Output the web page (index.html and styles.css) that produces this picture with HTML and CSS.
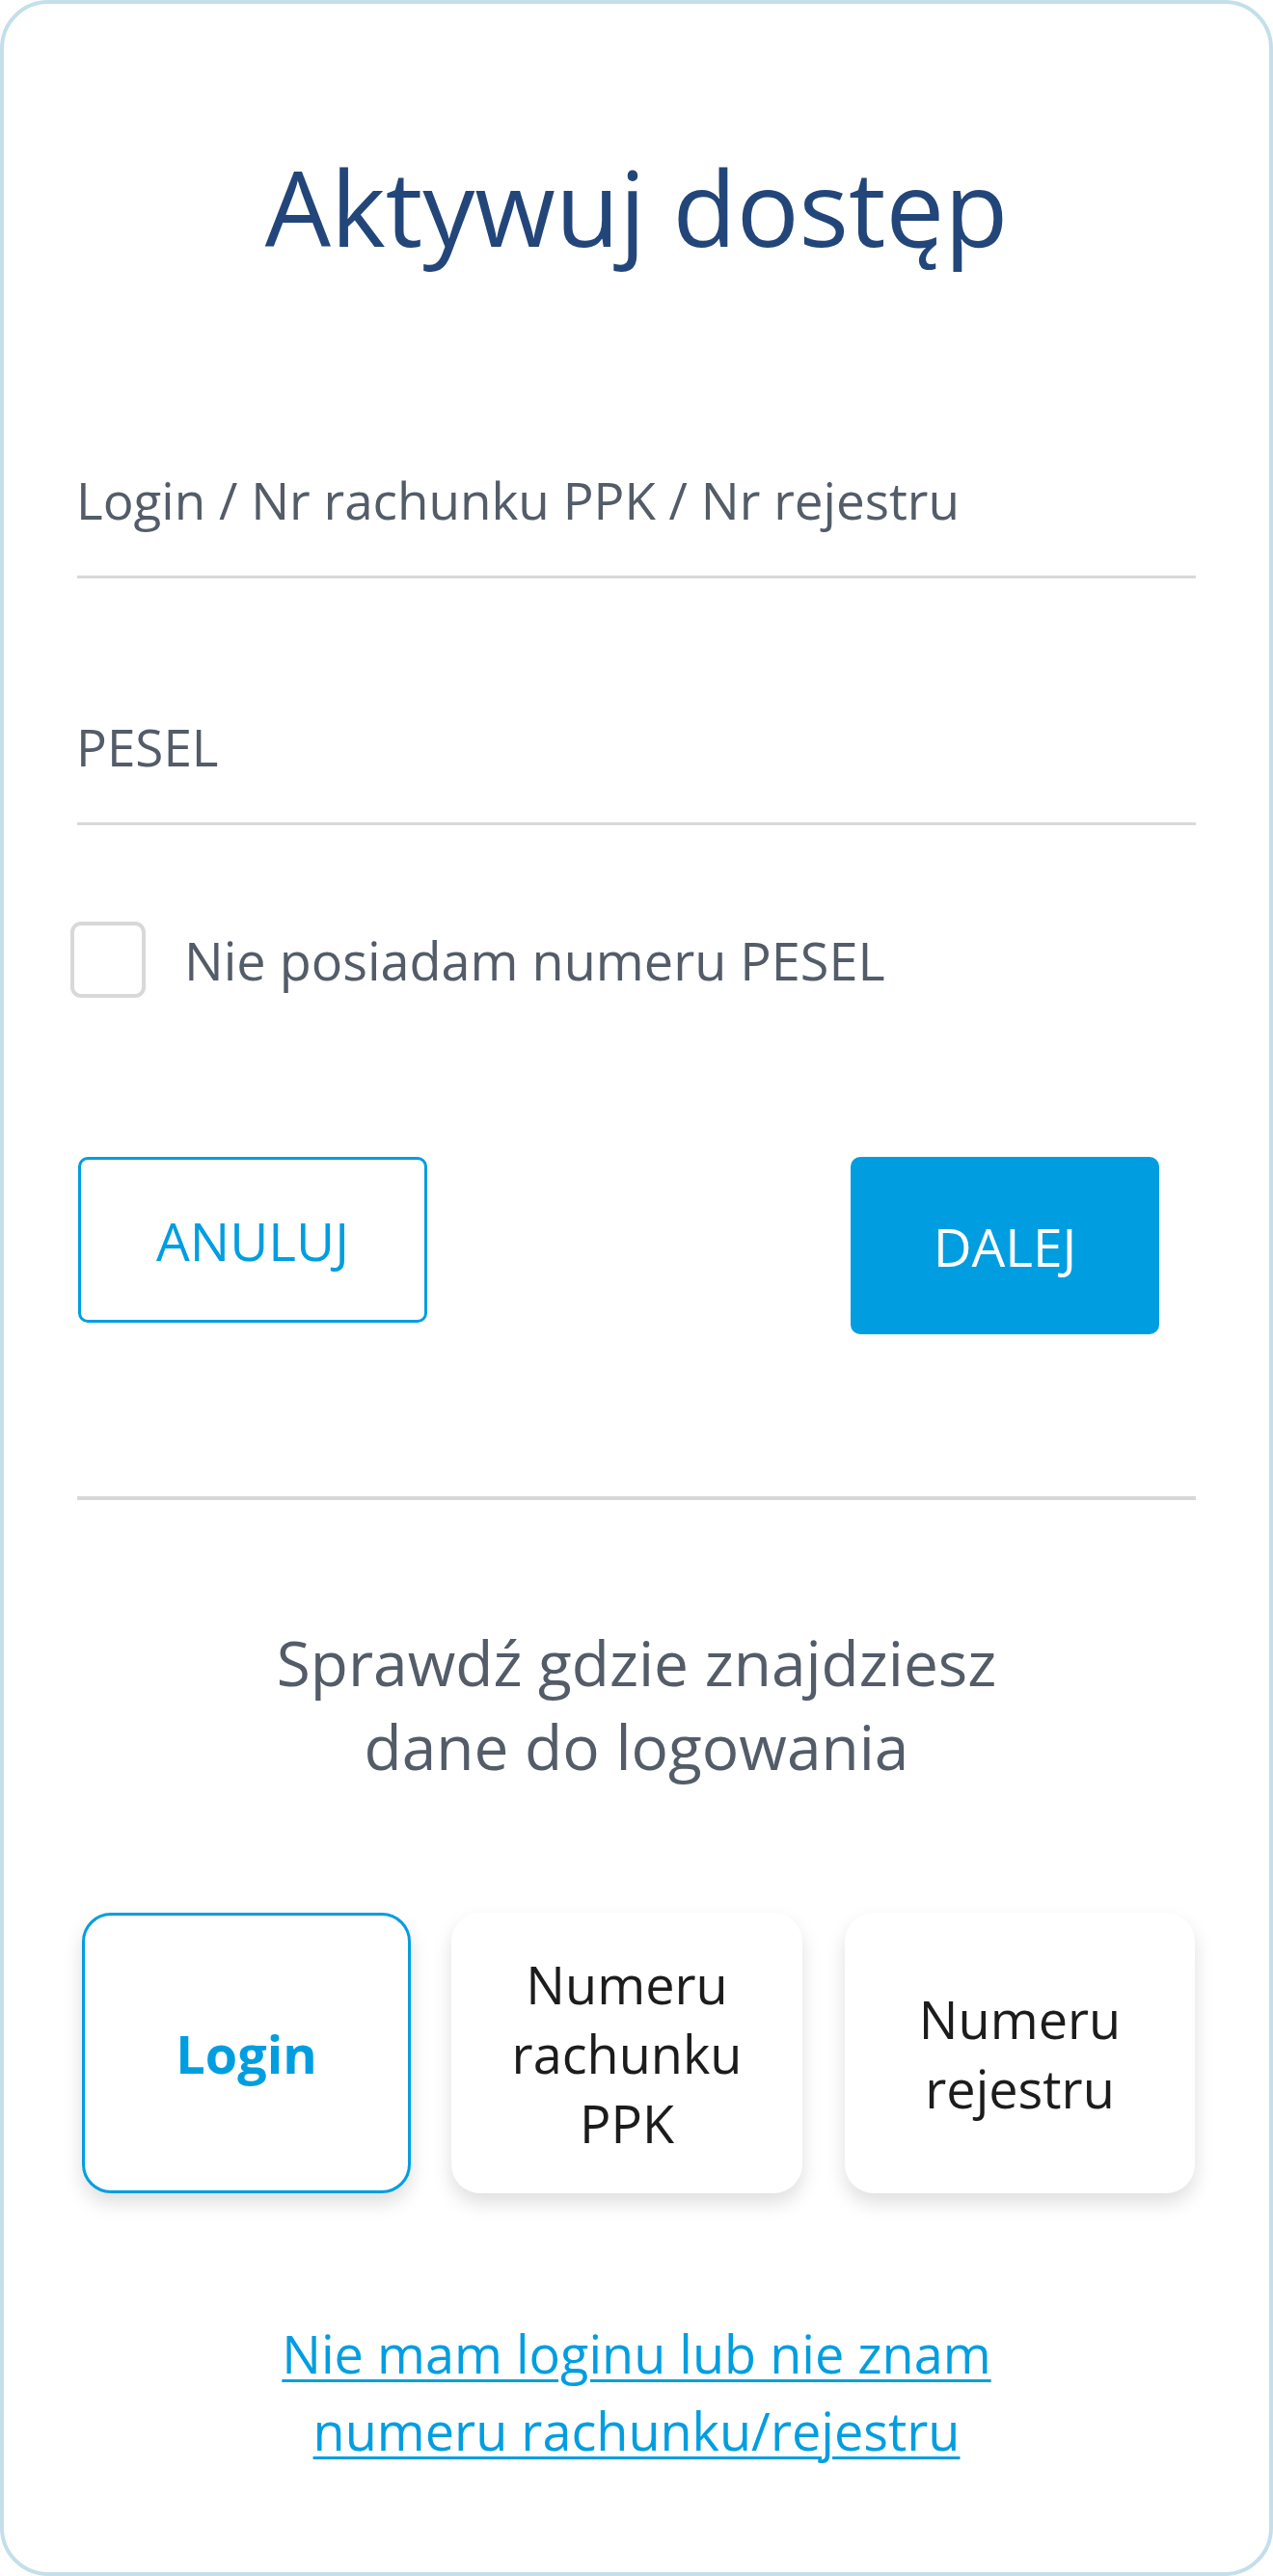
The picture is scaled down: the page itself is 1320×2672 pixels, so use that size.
FILE: index.html
```html
<!DOCTYPE html>
<html lang="pl">
<head>
<meta charset="utf-8">
<title>Aktywuj dostęp</title>
<link rel="stylesheet" href="styles.css">
</head>
<body>
<div class="card">
  <h1 class="title">Aktywuj dostęp</h1>
  <div class="field field-first"><span class="field-label">Login / Nr rachunku PPK / Nr rejestru</span></div>
  <div class="field field-second"><span class="field-label">PESEL</span></div>
  <label class="check-row"><span class="checkbox"></span><span class="check-label">Nie posiadam numeru PESEL</span></label>
  <div class="actions">
    <button class="btn btn-outline" type="button">ANULUJ</button>
    <button class="btn btn-primary" type="button">DALEJ</button>
  </div>
  <div class="divider"></div>
  <p class="help-title">Sprawdź gdzie znajdziesz<br>dane do logowania</p>
  <div class="tiles">
    <div class="tile tile-active">Login</div>
    <div class="tile tile-b">Numeru<br>rachunku<br>PPK</div>
    <div class="tile tile-c">Numeru<br>rejestru</div>
  </div>
  <p class="link-wrap"><a class="link" href="#">Nie mam loginu lub nie znam<br>numeru rachunku/rejestru</a></p>
</div>
</body>
</html>
```
FILE: styles.css
```css
html, body {
  margin: 0;
  padding: 0;
  background: #ffffff;
}

body {
  font-family: "Open Sans", "Noto Sans", sans-serif;
  color: #535c68;
}

.card {
  box-sizing: border-box;
  width: 1320px;
  height: 2672px;
  border: 4px solid #c3dfea;
  border-radius: 50px;
  padding: 146px 76px 0;
  background: #ffffff;
}

.title {
  margin: 0;
  font-size: 108px;
  line-height: 130px;
  font-weight: 400;
  font-stretch: 98.5%;
  color: #23467a;
  text-align: center;
}

.field {
  padding-bottom: 42px;
  border-bottom: 3px solid #d9d9d9;
}

.field-first {
  margin-top: 203px;
}

.field-second {
  margin-top: 139px;
}

.field-label {
  display: block;
  font-size: 53px;
  line-height: 72px;
  font-stretch: 99%;
  color: #535c68;
  text-indent: -1px;
}

.check-row {
  display: flex;
  align-items: center;
  margin-top: 100px;
  height: 79px;
}

.checkbox {
  box-sizing: border-box;
  flex: none;
  width: 78px;
  height: 79px;
  margin-left: -7px;
  border: 4px solid #d8d8d8;
  border-radius: 11px;
}

.check-label {
  margin-left: 40px;
  font-size: 54px;
  line-height: 72px;
  font-stretch: 99%;
  color: #535c68;
}

.actions {
  display: flex;
  justify-content: space-between;
  align-items: flex-start;
  margin-top: 165px;
  padding-right: 38px;
}

.btn {
  box-sizing: border-box;
  font-family: "Open Sans", "Noto Sans", sans-serif;
  font-size: 55px;
  font-weight: 400;
  font-stretch: 99%;
  border-radius: 10px;
  padding: 0;
  cursor: pointer;
}

.btn-outline {
  width: 362px;
  height: 172px;
  margin-left: 1px;
  border: 3px solid #009ee0;
  background: #ffffff;
  color: #009ee0;
}

.btn-primary {
  width: 320px;
  height: 184px;
  border: none;
  background: #009ee0;
  color: #ffffff;
}

.divider {
  height: 4px;
  margin-top: 168px;
  background: #d7d7d7;
}

.help-title {
  margin: 125px 0 0;
  font-size: 64px;
  line-height: 87px;
  font-stretch: 96%;
  text-align: center;
  color: #535c68;
}

.tiles {
  display: flex;
  align-items: stretch;
  margin-top: 129px;
  height: 291px;
}

.tile {
  box-sizing: border-box;
  display: flex;
  align-items: center;
  justify-content: center;
  text-align: center;
  border-radius: 30px;
  background: #ffffff;
  box-shadow: 0 10px 20px rgba(0, 0, 0, 0.13);
  font-size: 54px;
  line-height: 72px;
  font-stretch: 96%;
  color: #1c1c1c;
}

.tile-active {
  width: 341px;
  margin-left: 5px;
  border: 3px solid #009ee0;
  color: #009ee0;
  font-weight: 700;
  font-stretch: 96%;
}

.tile-b {
  width: 364px;
  margin-left: 42px;
}

.tile-c {
  width: 363px;
  margin-left: 44px;
}

.link-wrap {
  margin: 126px 0 0;
  text-align: center;
  font-size: 54px;
  line-height: 80px;
  font-stretch: 98.5%;
}

.link {
  color: #009ee0;
  text-decoration: underline;
  text-decoration-thickness: 3px;
  text-underline-offset: 6px;
}
```
